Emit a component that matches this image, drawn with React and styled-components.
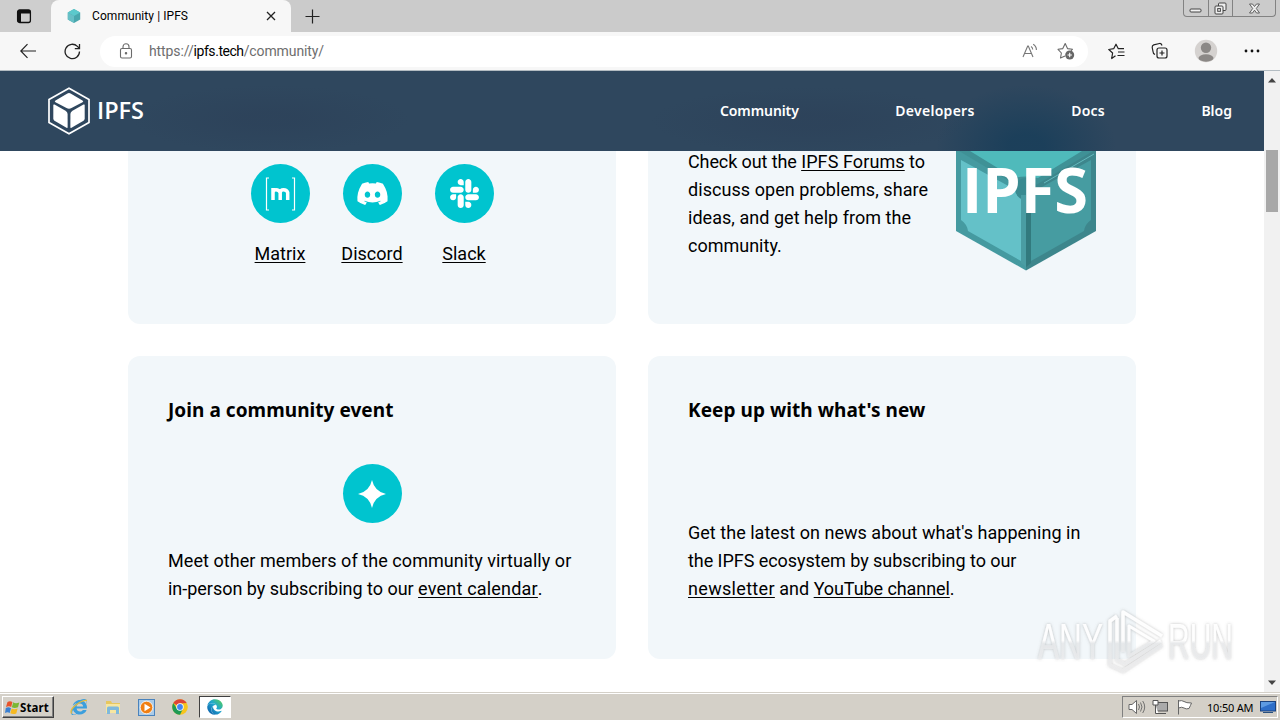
import React from 'react';
import styled, { createGlobalStyle } from 'styled-components';
import { FaDiscord, FaSlack, FaInternetExplorer, FaEdge } from 'react-icons/fa';

const GlobalStyle = createGlobalStyle`
  * { box-sizing: border-box; }
  body {
    margin: 0;
    overflow: hidden;
    font-family: Roboto, sans-serif;
    color: #000;
  }
  svg { display: block; flex: none; }
`;

/* ---------- browser chrome ---------- */

const Screen = styled.div`
  position: relative;
  display: flex;
  flex-direction: column;
  width: 1280px;
  height: 720px;
  overflow: hidden;
  background: #fff;
`;

const TabStrip = styled.div`
  display: flex;
  height: 32px;
  background: #cbcbcb;
`;

const TabActions = styled.div`
  display: flex;
  align-items: center;
  width: 51px;
  padding-left: 16px;
  background: #cecece;
`;

const Tab = styled.div`
  display: flex;
  align-items: center;
  width: 240px;
  padding: 0 14px 0 16px;
  background: #f7f7f7;
  border-radius: 8px 8px 0 0;
`;

const TabTitle = styled.span`
  flex: 1;
  margin-left: 11px;
  font-size: 12px;
  letter-spacing: 0.07px;
`;

const NewTab = styled.div`
  display: flex;
  align-items: center;
  flex: 1;
  padding-left: 14px;
`;

const WindowControls = styled.div`
  display: flex;
  width: 93px;
  height: 17px;
  margin-right: 4px;
  border: 1px solid #828282;
  border-top: 0;
  border-radius: 0 0 4px 4px;
`;

const WindowButton = styled.div`
  display: flex;
  justify-content: center;
  align-items: center;
  width: ${(p) => p.$w}px;
  border-right: ${(p) => (p.$last ? 'none' : '1px solid #828282')};
`;

const Toolbar = styled.div`
  display: flex;
  align-items: center;
  height: 39px;
  padding: 0 10px 0 20px;
  background: #f7f7f7;
  border-bottom: 1px solid #b3bcc2;
`;

const AddressBar = styled.div`
  display: flex;
  flex: none;
  align-items: center;
  width: 988px;
  height: 31px;
  margin: 0 20px 0 19px;
  padding: 0 13px 0 18px;
  background: #fff;
  border-radius: 16px;
  font-size: 14px;
`;

const Url = styled.div`
  flex: 1;
  margin-left: 15px;
  color: #6e6e6e;
  letter-spacing: -0.1px;
`;

const Host = styled.span`
  color: #000;
  letter-spacing: -0.45px;
`;

const ToolIcons = styled.div`
  display: flex;
  align-items: center;
  gap: ${(p) => p.$gap}px;
`;

/* ---------- page ---------- */

const Viewport = styled.div`
  display: flex;
  height: 621px;
`;

const Page = styled.div`
  width: 1264px;
  overflow: hidden;
`;

const Header = styled.header`
  display: flex;
  align-items: center;
  justify-content: space-between;
  height: 80px;
  padding: 0 32px 0 48px;
  background:
    radial-gradient(ellipse 90px 62px at 1026px 76px, rgba(27, 63, 90, 0.95) 20%, rgba(27, 63, 90, 0) 100%),
    radial-gradient(ellipse 140px 34px at 270px 48px, rgba(44, 64, 88, 0.55) 20%, rgba(44, 64, 88, 0) 100%),
    radial-gradient(ellipse 160px 34px at 810px 50px, rgba(44, 64, 88, 0.55) 20%, rgba(44, 64, 88, 0) 100%),
    #2f475e;
`;

const Nav = styled.nav`
  display: flex;
  justify-content: space-between;
  width: 512px;
  padding-bottom: 1px;
  color: #fff;
  font: 600 14px 'Noto Sans', sans-serif;
`;

const NavLink = styled.a`
  letter-spacing: ${(p) => p.$track || 0}px;
`;

const Grid = styled.main`
  display: grid;
  grid-template-columns: 488px 488px;
  grid-template-rows: 173px 303px;
  gap: 32px;
  padding-left: 128px;
`;

const Card = styled.section`
  display: flex;
  flex-direction: column;
  padding: 40px;
  background: #f2f7fa;
  border-radius: 12px;
`;

const ScrolledCard = styled(Card)`
  flex-direction: row;
  padding: 0 40px;
  border-radius: 0 0 12px 12px;
`;

const CardTitle = styled.h3`
  margin: 0;
  font: 700 19px/28px 'Noto Sans', sans-serif;
  letter-spacing: 0.05px;
`;

const Paragraph = styled.p`
  margin: ${(p) => p.$top}px 0 0;
  font-size: 18px;
  line-height: 28px;
  white-space: nowrap;
`;

const Line = styled.span`
  display: block;
  letter-spacing: ${(p) => p.$track || 0}px;
`;

const Link = styled.a`
  color: #000;
  text-decoration: underline;
  text-decoration-thickness: 1px;
  text-underline-offset: 2px;
  letter-spacing: ${(p) => p.$track || 0}px;
`;

const ChatList = styled.div`
  display: grid;
  grid-template-columns: repeat(3, 92px);
  justify-content: center;
  width: 100%;
  padding-top: 13px;
`;

const ChatItem = styled.div`
  display: flex;
  flex-direction: column;
  align-items: center;
  gap: 17px;
  font-size: 18px;
  line-height: 28px;
`;

const Disc = styled.div`
  display: flex;
  align-items: center;
  justify-content: center;
  width: 59px;
  height: 59px;
  border-radius: 50%;
  background: #00c4cf;
  color: #fff;
`;

const EventDisc = styled(Disc)`
  margin: 40px auto 0;
`;

const ForumText = styled.div`
  width: 268px;
`;

const Scrollbar = styled.div`
  display: flex;
  flex-direction: column;
  align-items: center;
  width: 16px;
  padding: 6px 0;
  background: #f1f1f1;
`;

const Thumb = styled.div`
  width: 12px;
  height: 62px;
  margin: 67px 0 auto;
  background: #a8a8a8;
`;

/* ---------- taskbar ---------- */

const Taskbar = styled.div`
  display: flex;
  align-items: center;
  height: 28px;
  padding: 2px 2px 0;
  background: #d4d0c8;
  box-shadow: inset 0 1px #d4d0c8, inset 0 2px #fff;
`;

const StartButton = styled.div`
  display: flex;
  align-items: center;
  gap: 0;
  width: 52px;
  height: 22px;
  padding-left: 2px;
  border: 1px solid;
  border-color: #fff #404040 #404040 #fff;
  box-shadow: inset -1px -1px #808080;
  font: 700 11.5px 'Noto Sans', sans-serif;
  letter-spacing: 0.1px;
`;

const QuickLaunch = styled.div`
  display: flex;
  align-items: center;
  gap: 17px;
  margin-left: 16px;
`;

const ActiveTask = styled.div`
  display: flex;
  align-items: center;
  justify-content: center;
  width: 32px;
  height: 22px;
  margin-left: 11px;
  background: #fff;
  border: 1px solid;
  border-color: #404040 #fff #fff #404040;
`;

const Tray = styled.div`
  display: flex;
  align-items: center;
  width: 156px;
  height: 22px;
  margin-left: auto;
  padding-left: 5px;
  border: 1px solid;
  border-color: #808080 #fff #fff #808080;
`;

const Clock = styled.span`
  width: 47px;
  margin: 0 6px 0 12px;
  font: 11px 'Noto Sans', sans-serif;
  letter-spacing: -0.2px;
  white-space: nowrap;
`;

/* floats over the page content */
const Watermark = styled.div`
  position: absolute;
  left: 1030px;
  top: 602px;
  pointer-events: none;
`;

const CubeIcon = () => (
  <svg width="14" height="16" viewBox="0 0 14 16">
    <path d="M7 1 13.2 4.4v7.2L7 15 .8 11.6V4.4z" fill="#4aa7ad" />
    <path d="M7 1 13.2 4.4 7 8 .8 4.4z" fill="#5cc9cc" />
    <path d="M.8 4.4 7 8v7L.8 11.6z" fill="#67bfc6" />
  </svg>
);

const HeaderLogo = () => (
  <svg width="98" height="48" viewBox="0 0 98 48">
    <path d="M21 1.2 41 12.6v22.8L21 46.8 1 35.4V12.6z" fill="none" stroke="#fff" strokeWidth="1.7" />
    <path d="M21 6 Q22 6 23 6.8L34.5 13.4 Q36 14.4 34.5 15.3L23.5 21Q21 22.3 18.5 21L7.5 15.3Q6 14.4 7.5 13.4L19 6.8Q20 6 21 6z" fill="#fff" />
    <path d="M5.3 18Q5.3 17 6.5 17.6L17.5 23.7Q19.6 25 19.6 27V40.2Q19.6 41.3 18.5 40.7L6.5 33.8Q5.3 33 5.3 31.5z" fill="#fff" />
    <path d="M36.7 18Q36.7 17 35.5 17.6L24.5 23.7Q22.4 25 22.4 27V40.2Q22.4 41.3 23.5 40.7L35.5 33.8Q36.7 33 36.7 31.5z" fill="#fff" />
    <text x="49" y="32" fill="#fff" fontFamily="Open Sans, sans-serif" fontSize="23" fontWeight="600" textLength="47" lengthAdjust="spacingAndGlyphs">IPFS</text>
  </svg>
);

const ForumCube = () => (
  <svg width="140" height="120" viewBox="0 0 140 120">
    <path d="M0 0H70V119.500L0 80z" fill="#459aa0" />
    <path d="M140 0H70V119.500L140 80z" fill="#3d868c" />
    <path d="M5 9 65 42V110L12 80Q11 73 5 69z" fill="#64c1c8" />
    <path d="M135 9 75 42V110L128 80Q129 73 135 69z" fill="#469ca1" />
    <path d="M3 0H137L70 40z" fill="#3f9196" />
    <path d="M14 0H126L82 27Q70 24 58 27z" fill="#4fbabb" />
    <path d="M138 3 88 32" stroke="#63b9bd" strokeWidth="1" />
    <circle cx="70" cy="38" r="11" fill="#398a90" />
    <path d="M65 44h5v72l-5-4z" fill="#4a9da3" />
    <path d="M70 44h5v68l-5 4z" fill="#327a7e" />
    <text x="6" y="62" fill="#fff" fontFamily="Open Sans, sans-serif" fontSize="63" fontWeight="700" textLength="126" lengthAdjust="spacingAndGlyphs">IPFS</text>
  </svg>
);

const MatrixIcon = () => (
  <svg width="31" height="34" viewBox="0 0 31 34" fill="none" stroke="#fff">
    <path d="M4 1H1.500V33H4M27 1h2.500V33H27" strokeWidth="1.2" />
    <path d="M8 23V11M8 23V15.500Q8 12.700 11 12.700T15.200 15.500V23M15.200 15.800Q15.200 12.700 18.500 12.700T22.700 15.500V23" strokeWidth="3.500" />
  </svg>
);

const StarPlus = () => (
  <svg width="18" height="18" viewBox="0 0 18 18" fill="none" stroke="#6b6b6b" strokeWidth="1.100" strokeLinejoin="round">
    <path d="M8 14 3.500 16 4.400 11 1 7.300 5.800 6.600 8.200 1.500 10.500 6.600 15.500 7.200 14 9" />
    <circle cx="12.700" cy="13" r="4.500" fill="#666" stroke="none" />
    <path d="M10.500 13h4.400M12.700 10.800v4.400" stroke="#fff" />
  </svg>
);

const PlayMark = () => (
  <svg width="220" height="80" viewBox="0 0 220 80">
    <defs>
      <linearGradient id="fade" x1="0" y1="0" x2="0" y2="80" gradientUnits="userSpaceOnUse">
        <stop offset="0.48" stopColor="#fff" stopOpacity="0.95" />
        <stop offset="0.52" stopColor="#e9ebed" stopOpacity="0.8" />
        <stop offset="0.8" stopColor="#eeeeef" stopOpacity="0.8" />
      </linearGradient>
      <filter id="glow" x="-10%" y="-20%" width="120%" height="140%">
        <feDropShadow dx="0" dy="0" stdDeviation="1.800" floodColor="#777" floodOpacity="0.5" />
      </filter>
    </defs>
    <g filter="url(#glow)" fill="url(#fade)" fontFamily="Liberation Sans Narrow, Liberation Sans, sans-serif" fontSize="50">
      <text x="8" y="57" textLength="65" lengthAdjust="spacingAndGlyphs">ANY</text>
      <text x="138" y="57" textLength="65" lengthAdjust="spacingAndGlyphs">RUN</text>
      <g fill="none" stroke="url(#fade)" strokeWidth="3.500" strokeLinejoin="round">
        <path d="M87 14 80 19V63L93 69 132 43" />
        <path d="M87 16V58L95 62 131 39" />
        <path d="M93 50V10L132 34" />
        <path d="M99 24 124 39 99 54z" strokeWidth="3" />
      </g>
    </g>
  </svg>
);

export default function App() {
  return (
    <Screen>
      <GlobalStyle />
      <TabStrip>
        <TabActions>
          <svg width="16" height="16" viewBox="0 0 16 16">
            <rect x="1.600" y="2" width="12.800" height="12.500" rx="2" fill="none" stroke="#111" strokeWidth="1.300" />
            <path d="M1.500 5V3.500Q1.500 2 3 2h10q1.500 0 1.500 1.500V5.500H5v9H3q-1.500 0-1.500-1.500z" fill="#111" />
          </svg>
        </TabActions>
        <Tab>
          <CubeIcon />
          <TabTitle>Community | IPFS</TabTitle>
          <svg width="12" height="12" viewBox="0 0 12 12"><path d="M2 2l8 8M10 2l-8 8" stroke="#222" strokeWidth="1.300" /></svg>
        </Tab>
        <NewTab>
          <svg width="15" height="15" viewBox="0 0 15 15"><path d="M7.500 .5v14M.5 7.500h14" stroke="#222" strokeWidth="1.200" /></svg>
        </NewTab>
        <WindowControls>
          <WindowButton $w={25}>
            <svg width="13" height="17" viewBox="0 0 13 17"><rect x="1" y="9" width="11" height="3" rx="1" fill="#f2f2f2" stroke="#444" /></svg>
          </WindowButton>
          <WindowButton $w={25}>
            <svg width="13" height="17" viewBox="0 0 13 17" fill="#eee" stroke="#444">
              <rect x="4.500" y="3" width="7.500" height="7.500" rx="1" />
              <rect x="1" y="6" width="8" height="8" rx="1" />
              <rect x="3.700" y="8.600" width="2.700" height="2.700" />
            </svg>
          </WindowButton>
          <WindowButton $w={42} $last>
            <svg width="13" height="17" viewBox="0 0 13 17"><path d="M1.500 4h3l2 2.500L8.500 4h3L8.300 8.500l3.200 4.500h-3l-2-2.800L4.500 13h-3l3.200-4.500z" fill="#eee" stroke="#555" strokeWidth=".9" /></svg>
          </WindowButton>
        </WindowControls>
      </TabStrip>

      <Toolbar>
        <ToolIcons $gap={28}>
          <svg width="16" height="16" viewBox="0 0 16 16" fill="none" stroke="#222" strokeWidth="1.200"><path d="M16 8H.8M7.500 1.200.8 8l6.700 6.800" /></svg>
          <svg width="17" height="17" viewBox="0 0 17 17" fill="none" stroke="#222" strokeWidth="1.300"><path d="M15.500 8.500a7.200 7.200 0 1 1-2.100-5.100L15.500 5.500M15.500 1v4.700h-4.700" /></svg>
        </ToolIcons>
        <AddressBar>
          <svg width="16" height="16" viewBox="0 0 16 16" fill="none" stroke="#6b6b6b" strokeWidth="1.100">
            <rect x="2.500" y="5.500" width="11" height="9.500" rx="1.500" />
            <path d="M5 5.500V3.800a3 3 0 0 1 6 0V5.500" />
            <circle cx="8" cy="10.300" r=".7" fill="#6b6b6b" />
          </svg>
          <Url>https://<Host>ipfs.tech</Host>/community/</Url>
          <ToolIcons $gap={19}>
            <svg width="16" height="16" viewBox="0 0 16 16" fill="none" stroke="#777" strokeWidth="1.100"><path d="M1 14 5.700 3h.6L11 14M2.700 10.500h6.600M9 3.500q1.700 1 1.700 3M11.200 1.200q3.300 2 3.200 5.800" /></svg>
            <StarPlus />
          </ToolIcons>
        </AddressBar>
        <svg width="17" height="17" viewBox="0 0 17 17" fill="none" stroke="#222" strokeWidth="1.200" strokeLinejoin="round"><path d="M7.500 12.700 3.700 15.500 4.600 10 .8 6.500 5.700 5.700 8 1.200 10.300 5.700H16M10 9H16.500M9.500 12.500H16.500" /></svg>
        <svg width="96" height="24" viewBox="0 0 96 24" fill="none">
          <g stroke="#222" strokeWidth="1.200">
            <rect x="32" y="9" width="10" height="10" rx="2" />
            <path d="M37 11.500v5M34.500 14h5M30 15.500q-2-.8-2-3l-.8-4q-.2-2 1.500-2.600L34.500 4.500q2-.3 2.500 2" />
          </g>
          <circle cx="81" cy="12" r="11.200" fill="#d5d2d0" />
          <circle cx="81" cy="8.700" r="5.200" fill="#8b8886" />
          <ellipse cx="81" cy="19" rx="7.500" ry="3.700" fill="#8b8886" />
        </svg>
        <svg width="44" height="16" viewBox="0 0 44 16" fill="#111"><circle cx="25" cy="8" r="1.400" /><circle cx="31" cy="8" r="1.400" /><circle cx="37" cy="8" r="1.400" /></svg>
      </Toolbar>

      <Viewport>
        <Page>
          <Header>
            <HeaderLogo />
            <Nav>
              <NavLink $track={-0.1}>Community</NavLink>
              <NavLink $track={0.28}>Developers</NavLink>
              <NavLink $track={0.2}>Docs</NavLink>
              <NavLink>Blog</NavLink>
            </Nav>
          </Header>
          <Grid>
            <ScrolledCard>
              <ChatList>
                <ChatItem><Disc><MatrixIcon /></Disc><Link>Matrix</Link></ChatItem>
                <ChatItem><Disc><FaDiscord size={33} /></Disc><Link>Discord</Link></ChatItem>
                <ChatItem><Disc><FaSlack size={33} /></Disc><Link>Slack</Link></ChatItem>
              </ChatList>
            </ScrolledCard>
            <ScrolledCard>
              <ForumText>
                <Paragraph $top={-3}>
                  <Line $track={-0.1}>Check out the <Link $track={0.1}>IPFS Forums</Link> to</Line>
                  <Line $track={0.06}>discuss open problems, share</Line>
                  <Line $track={0.04}>ideas, and get help from the</Line>
                  <Line>community.</Line>
                </Paragraph>
              </ForumText>
              <ForumCube />
            </ScrolledCard>
            <Card>
              <CardTitle>Join a community event</CardTitle>
              <EventDisc>
                <svg width="28" height="28" viewBox="0 0 28 28"><path d="M14 0Q16.500 11.500 28 14 16.500 16.500 14 28 11.500 16.500 0 14 11.500 11.500 14 0z" fill="#fff" /></svg>
              </EventDisc>
              <Paragraph $top={24}>
                <Line $track={0.06}>Meet other members of the community virtually or</Line>
                <Line $track={-0.02}>in-person by subscribing to our <Link $track={0.2}>event calendar</Link>.</Line>
              </Paragraph>
            </Card>
            <Card>
              <CardTitle>Keep up with what's new</CardTitle>
              <Paragraph $top={95}>
                <Line $track={0.03}>Get the latest on news about what's happening in</Line>
                <Line $track={-0.05}>the IPFS ecosystem by subscribing to our</Line>
                <Line><Link $track={0.32}>newsletter</Link> and <Link $track={-0.08}>YouTube channel</Link>.</Line>
              </Paragraph>
            </Card>
          </Grid>
        </Page>
        <Scrollbar>
          <svg width="8" height="6" viewBox="0 0 8 6"><path d="M0 5.500 4 1l4 4.500z" fill="#444" /></svg>
          <Thumb />
          <svg width="8" height="6" viewBox="0 0 8 6"><path d="M0 .5 4 5l4-4.500z" fill="#444" /></svg>
        </Scrollbar>
      </Viewport>

      <Taskbar>
        <StartButton>
          <svg width="15" height="15" viewBox="0 0 15 15">
            <path d="M2.500 2Q5 .5 7.400 2L6.200 7Q4 5.500 1 7z" fill="#e8532b" />
            <path d="M8.200 2.300Q10.500 4 14.300 2.500L13 7.300Q9.500 8.800 6.900 7.300z" fill="#7bb733" />
            <path d="M.8 8Q3.500 6.600 6 8.200L4.700 13Q2.500 11.500 0 13z" fill="#3a80d2" />
            <path d="M6.700 8.500Q9 10 12.600 8.500L11.300 13.500Q8 14.800 5.300 13.300z" fill="#f6b921" />
          </svg>
          Start
        </StartButton>
        <QuickLaunch>
          <svg width="18" height="18" viewBox="0 0 18 18">
            <FaInternetExplorer x="1" y="1" width="16" height="16" color="#3c9fdd" />
            <path d="M1.500 15.500Q-.5 12 6 7T17 2.500" fill="none" stroke="#e8bc3a" strokeWidth="1.300" />
          </svg>
          <svg width="16" height="16" viewBox="0 0 16 16">
            <path d="M1 2h5l1 2h8v10H1z" fill="#e7c75f" />
            <path d="M1 5h14v9H1z" fill="#f7e6a0" />
            <path d="M2 9Q2 7.500 3.500 7.500h9Q14 7.500 14 9v6h-3v-4H5v4H2z" fill="#7fb9dc" />
          </svg>
          <svg width="17" height="17" viewBox="0 0 17 17">
            <rect x=".5" y=".5" width="16" height="16" fill="#aacbe8" stroke="#4a83bd" />
            <circle cx="8.500" cy="8.500" r="6.300" fill="#f07f13" stroke="#fff" strokeWidth=".8" />
            <path d="M6.500 4.800v7.400l6-3.700z" fill="#fff" />
          </svg>
          <svg width="16" height="16" viewBox="0 0 16 16">
            <circle cx="8" cy="8" r="7.800" fill="#f7c51d" />
            <path d="M8 8 1.250 4.100A7.800 7.800 0 0 1 14.750 4.100L8 4.500z" fill="#dd4437" />
            <path d="M8 8 5 9.800 1.250 4.100A7.800 7.800 0 0 0 8 15.800L11 9.800z" fill="#1e9a55" />
            <circle cx="8" cy="8" r="3.700" fill="#fff" />
            <circle cx="8" cy="8" r="2.900" fill="#4285f4" />
          </svg>
        </QuickLaunch>
        <ActiveTask>
          <svg width="17" height="17" viewBox="0 0 17 17">
            <defs>
              <linearGradient id="edge" x1="1" y1="0" x2="0" y2="1">
                <stop offset="0" stopColor="#5bd24b" />
                <stop offset="0.450" stopColor="#20a7cf" />
                <stop offset="1" stopColor="#0a54a5" />
              </linearGradient>
            </defs>
            <FaEdge width="17" height="17" fill="url(#edge)" />
          </svg>
        </ActiveTask>
        <Tray>
          <svg width="18" height="16" viewBox="0 0 18 16" fill="#fff" stroke="#666">
            <path d="M1 5.500h3L8.500 1.500v13L4 10.500H1z" />
            <path d="M10.500 5q2 3 0 6M12.500 3.500q3 4.500 0 9M14.700 2q4 6 0 12" fill="none" strokeWidth=".9" />
          </svg>
          <svg width="24" height="18" viewBox="0 0 24 18" fill="#fff" stroke="#555">
            <rect x="9.500" y="4.500" width="12" height="8.500" fill="#aaa" />
            <path d="M11 15.500h9M7 2.500h5v4.500H7zM9.500 7v8.500h3" />
          </svg>
          <svg width="25" height="16" viewBox="0 0 25 16" fill="#fff" stroke="#666">
            <path d="M8.500 1v14.500M8.500 2Q12 1 14 2.500T21.500 4Q20.500 6.500 19 9.500 16 10.500 14 9T8.500 9z" />
          </svg>
          <Clock>10:50 AM</Clock>
          <svg width="16" height="14" viewBox="0 0 16 14">
            <rect x=".5" y="1.500" width="15" height="9.500" fill="#2e6fc9" stroke="#1b437f" />
            <path d="M1 2h14L1 8z" fill="#5d9be3" />
            <path d="M3 12.500h10" stroke="#28507f" />
          </svg>
        </Tray>
      </Taskbar>

      <Watermark><PlayMark /></Watermark>
    </Screen>
  );
}
